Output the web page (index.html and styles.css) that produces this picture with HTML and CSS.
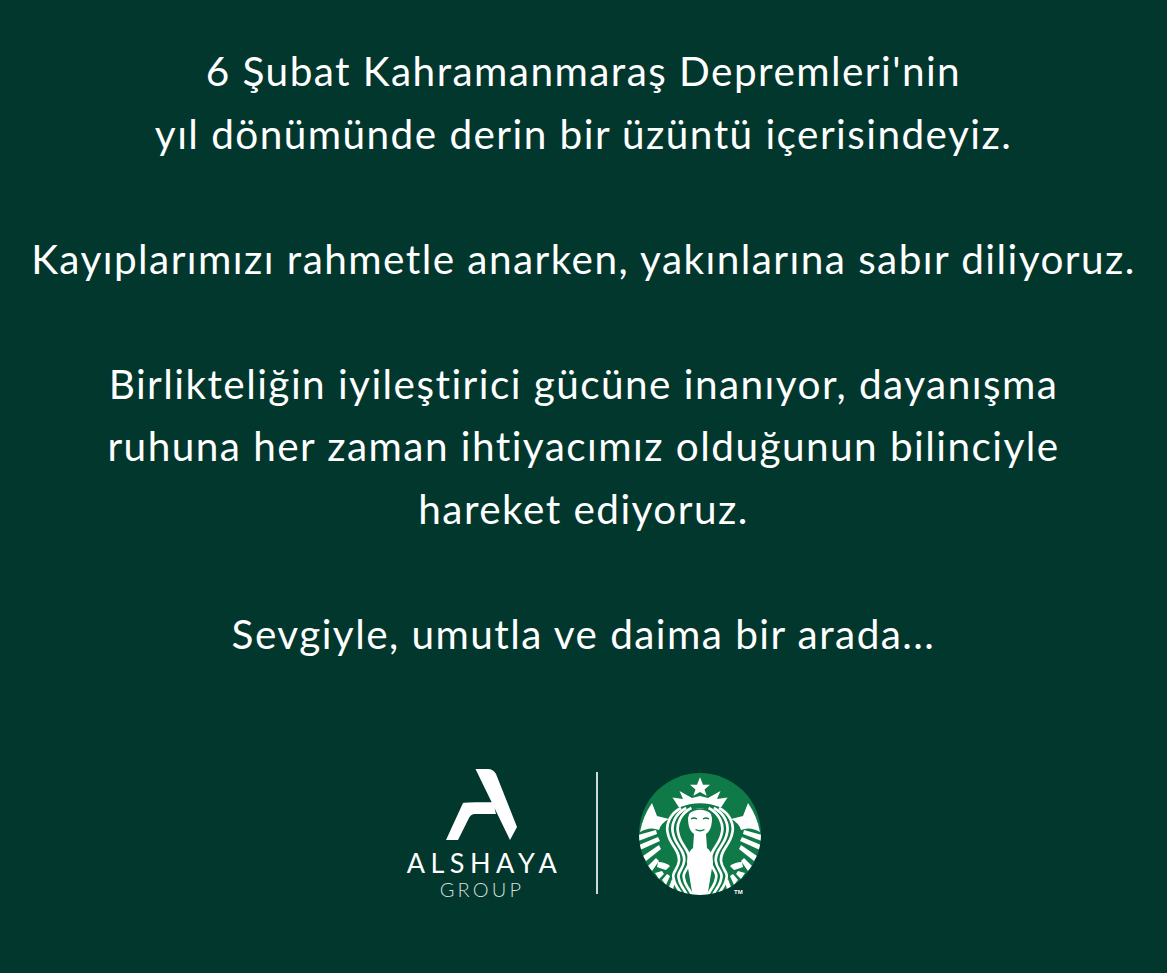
FILE: index.html
```html
<!DOCTYPE html>
<html lang="tr">
<head>
<meta charset="utf-8">
<title>6 Şubat</title>
<link rel="stylesheet" href="styles.css">
</head>
<body>
<main class="post">
  <div class="message">
    <p>6 Şubat Kahramanmaraş Depremleri'nin<br>yıl dönümünde derin bir üzüntü içerisindeyiz.</p>
    <p>Kayıplarımızı rahmetle anarken, yakınlarına sabır diliyoruz.</p>
    <p>Birlikteliğin iyileştirici gücüne inanıyor, dayanışma<br>ruhuna her zaman ihtiyacımız olduğunun bilinciyle<br>hareket ediyoruz.</p>
    <p>Sevgiyle, umutla ve daima bir arada...</p>
  </div>
  <div class="logos">
    <div class="alshaya">
      <svg class="a-mark" viewBox="0 0 72 72"><path d="M29.500 0H42Q47 0 50 5L71 58L64 71Z M0 71L17 34Q20 33 47 33L50 45H29Q25 45 23 49L12 71Z" fill="#fff"/></svg>
      <div class="a-name">ALSHAYA</div>
      <div class="a-group">GROUP</div>
    </div>
    <div class="divider"></div>
    <svg class="siren" viewBox="0 0 140 135">
      <defs>
        <clipPath id="disc"><circle cx="70" cy="68" r="61"/></clipPath>
        <path id="strand" d="M56 42C46 47 40 58 43 68C45 79 55 84 54 95C53 104 46 106 49 114C50 120 55 124 57 130"/>
        <g id="side">
          <path class="w" d="M10 66Q13 50 22 37L27 50L39 53Q31 57 29 64Q20 60 10 66Z"/>
          <path class="w" d="M8 69L26 64L27 68L8 75Z"/>
          <path class="w" d="M9 79L28 71L30 75L10 84Z"/>
          <path class="w" d="M13 90L29 79L31 83L16 95Z"/>
          <path class="w" d="M18 100L26 92L29 95L22 105Z"/>
          <path class="w" d="M28 96Q35 96 40 100L36 104Q32 103 27 101Z"/>
          <path class="w" d="M25 107L32 105L34 108L29 113Z"/>
          <path class="w" d="M32 114L37 108L40 110L36 119Z"/>
          <path class="w" d="M39 121L42 113L45 115L43 124Z"/>
          <g class="hair">
            <use href="#strand" x="-5"/>
            <use href="#strand" x="0.200"/>
            <use href="#strand" x="5.400"/>
          </g>
        </g>
      </defs>
      <circle cx="70" cy="68" r="61" class="g"/>
      <g clip-path="url(#disc)">
        <use href="#side"/>
        <use href="#side" transform="translate(140) scale(-1 1)"/>
        <path class="w" d="M70 11.300L73 18.700L80 18.700L74.500 23.500L76.700 29.700L70 26L63.300 29.700L65.500 23.500L60 18.700L67 18.700Z"/>
        <path class="w" d="M42.500 31.500L53 33L49.500 25L62 32L70 30L78 32L90.500 25L87 33L97.500 31.500L91 41.500Q70 33 49 41.500Z"/>
        <path class="w" d="M58 52Q59 43 70 42Q81 43 82 52Q82 69 70 70Q58 69 58 52Z"/>
        <path class="w" d="M64 68H76L77 82Q83 86 83 96L77 132H63L57 96Q57 86 63 82Z"/>
        <path class="gl" d="M58 47Q70 39 82 47"/>
        <path class="gl" d="M61 53Q64 51 67 53M73 53Q76 51 79 53"/>
        <path class="gl" d="M65.500 63.500Q70 66 74.500 63.500"/>
      </g>
      <text class="tm" x="104" y="128">TM</text>
    </svg>
  </div>
</main>
</body>
</html>
```
FILE: styles.css
```css
html, body { margin: 0; padding: 0; background: #02372e; }
.post {
  width: 1167px;
  height: 973px;
  box-sizing: border-box;
  padding-top: 40px;
  background: #02372e;
  color: #fff;
  font-family: Lato, "Noto Sans", sans-serif;
  display: flex;
  flex-direction: column;
  align-items: center;
  overflow: hidden;
}
.message { text-align: center; font-size: 40.5px; line-height: 62.5px; letter-spacing: 1.45px; white-space: nowrap; }
.message p { margin: 0 0 62.5px; }
.logos { display: flex; align-items: flex-start; margin-top: 41px; height: 140px; margin-left: 9px; }
.alshaya { width: 152px; display: flex; flex-direction: column; align-items: center; }
.a-mark { width: 72px; height: 72px; display: block; }
.a-name { font-size: 27px; line-height: 31px; letter-spacing: 5.5px; margin-top: 6px; margin-right: -5px; }
.a-group { font-size: 20px; line-height: 22px; letter-spacing: 3.2px; font-weight: 300; color: #d5dfdc; }
.divider { width: 2px; height: 122px; background: #cfdad7; margin: 3px 0 0 38px; }
.siren { width: 140px; height: 135px; display: block; margin-left: 32px; margin-top: -3px; }
.g { fill: #0f7a48; }
.w { fill: #fff; }
.hair { fill: none; stroke: #fff; stroke-width: 2.7; }
.gl { fill: none; stroke: #0f7a48; stroke-width: 1.4; }
.tm { font-family: "Liberation Sans", sans-serif; font-size: 6px; font-weight: 700; fill: #fff; }
```
